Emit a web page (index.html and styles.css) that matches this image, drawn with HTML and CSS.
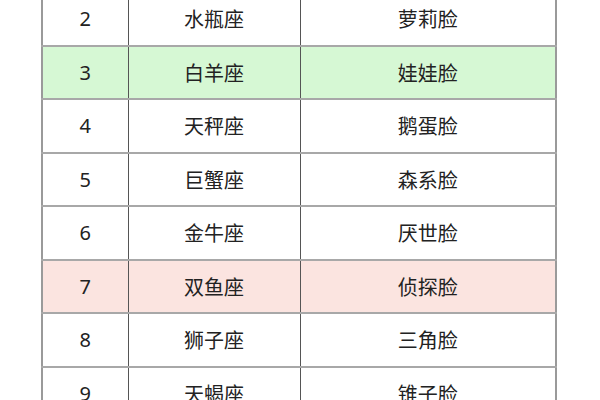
FILE: index.html
```html
<!DOCTYPE html>
<html lang="zh-CN">
<head>
<meta charset="utf-8">
<link rel="stylesheet" href="styles.css">
</head>
<body>
<table class="rank">
  <colgroup><col class="c1"><col class="c2"><col class="c3"></colgroup>
  <tbody>
    <tr><td>2</td><td>水瓶座</td><td>萝莉脸</td></tr>
    <tr class="green"><td>3</td><td>白羊座</td><td>娃娃脸</td></tr>
    <tr><td>4</td><td>天秤座</td><td>鹅蛋脸</td></tr>
    <tr><td>5</td><td>巨蟹座</td><td>森系脸</td></tr>
    <tr><td>6</td><td>金牛座</td><td>厌世脸</td></tr>
    <tr class="pink"><td>7</td><td>双鱼座</td><td>侦探脸</td></tr>
    <tr><td>8</td><td>狮子座</td><td>三角脸</td></tr>
    <tr><td>9</td><td>天蝎座</td><td>锥子脸</td></tr>
  </tbody>
</table>
</body>
</html>
```
FILE: styles.css
```css
html, body {
  margin: 0;
  padding: 0;
  background: #ffffff;
  overflow: hidden;
  height: 400px;
}
.rank {
  border-collapse: collapse;
  margin: -9px 0 0 41px;
  width: 514px;
  table-layout: fixed;
  font-family: "Noto Sans", "Noto Sans CJK SC", sans-serif;
  font-size: 20px;
  color: #222222;
}
.c1 { width: 86px; }
.c2 { width: 172px; }
.c3 { width: 256px; }
.rank tr { height: 53.5px; }
.rank td {
  text-align: center;
  vertical-align: middle;
  padding: 0;
  border-top: 2px solid #a8a8a8;
  border-bottom: 2px solid #a8a8a8;
  border-left: 1px solid #555555;
  border-right: 1px solid #555555;
}
.rank td:first-child { border-left: 2px solid #9a9a9a; }
.rank td:last-child { border-right: 2px solid #9a9a9a; }
.green td { background: #d6f8d4; }
.pink td { background: #fbe4e0; }
```
